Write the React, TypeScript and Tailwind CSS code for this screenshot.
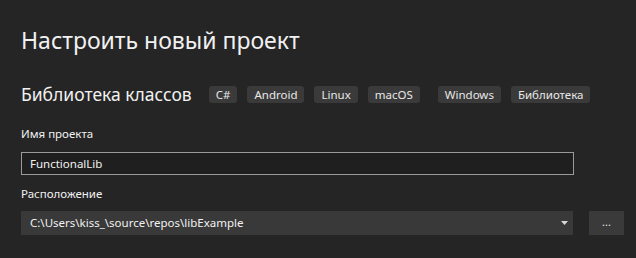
const tags = [
  { label: "C#", gap: "ml-0" },
  { label: "Android", gap: "ml-[10px]" },
  { label: "Linux", gap: "ml-[10px]" },
  { label: "macOS", gap: "ml-[10px]" },
  { label: "Windows", gap: "ml-[18px]" },
  { label: "Библиотека", gap: "ml-[10px]" },
];

export default function App() {
  return (
    <div
      className="w-[636px] h-[258px] bg-[#252526] text-[#f1f1f1] pl-[21px] pr-[12px] pt-[24px] overflow-hidden"
      style={{ fontFamily: '"Noto Sans", "Open Sans", sans-serif' }}
    >
      {/* Заголовок */}
      <h1 className="text-[23px] leading-[32px] font-normal">Настроить новый проект</h1>

      {/* Шаблон и теги */}
      <div className="flex items-center mt-[26px] h-[24px]">
        <span className="text-[17.5px] leading-[24px] mr-[17px]">Библиотека классов</span>
        <div className="flex">
          {tags.map((t) => (
            <span
              key={t.label}
              className={`${t.gap} bg-[#3a3a3a] text-[#e8e8e8] text-[11.5px] leading-[17px] px-[7px] rounded-[3px]`}
            >
              {t.label}
            </span>
          ))}
        </div>
      </div>

      {/* Имя проекта */}
      <div className="mt-[20px] text-[11.5px] leading-[16px]">Имя проекта</div>
      <div className="mt-[10px] w-[553px] h-[23px] border border-[#9a9a9a] bg-[#1f1f1f] flex items-center px-[8px] text-[11.5px]">
        FunctionalLib
      </div>

      {/* Расположение */}
      <div className="mt-[11px] text-[11.5px] leading-[16px]">Расположение</div>
      <div className="flex mt-[9px] gap-[16px]">
        <div className="w-[552px] h-[24px] bg-[#393939] flex items-center justify-between pl-[9px] pr-[5px] text-[11.5px]">
          <span>C:\Users\kiss_\source\repos\libExample</span>
          <svg width="7" height="4" viewBox="0 0 7 4">
            <path d="M0 0 L7 0 L3.5 4 Z" fill="#d8d8d8" />
          </svg>
        </div>
        <button className="w-[35px] h-[24px] bg-[#3a3a3a] text-[#e0e0e0] text-[11px] leading-none pb-[3px]">
          ...
        </button>
      </div>
    </div>
  );
}
